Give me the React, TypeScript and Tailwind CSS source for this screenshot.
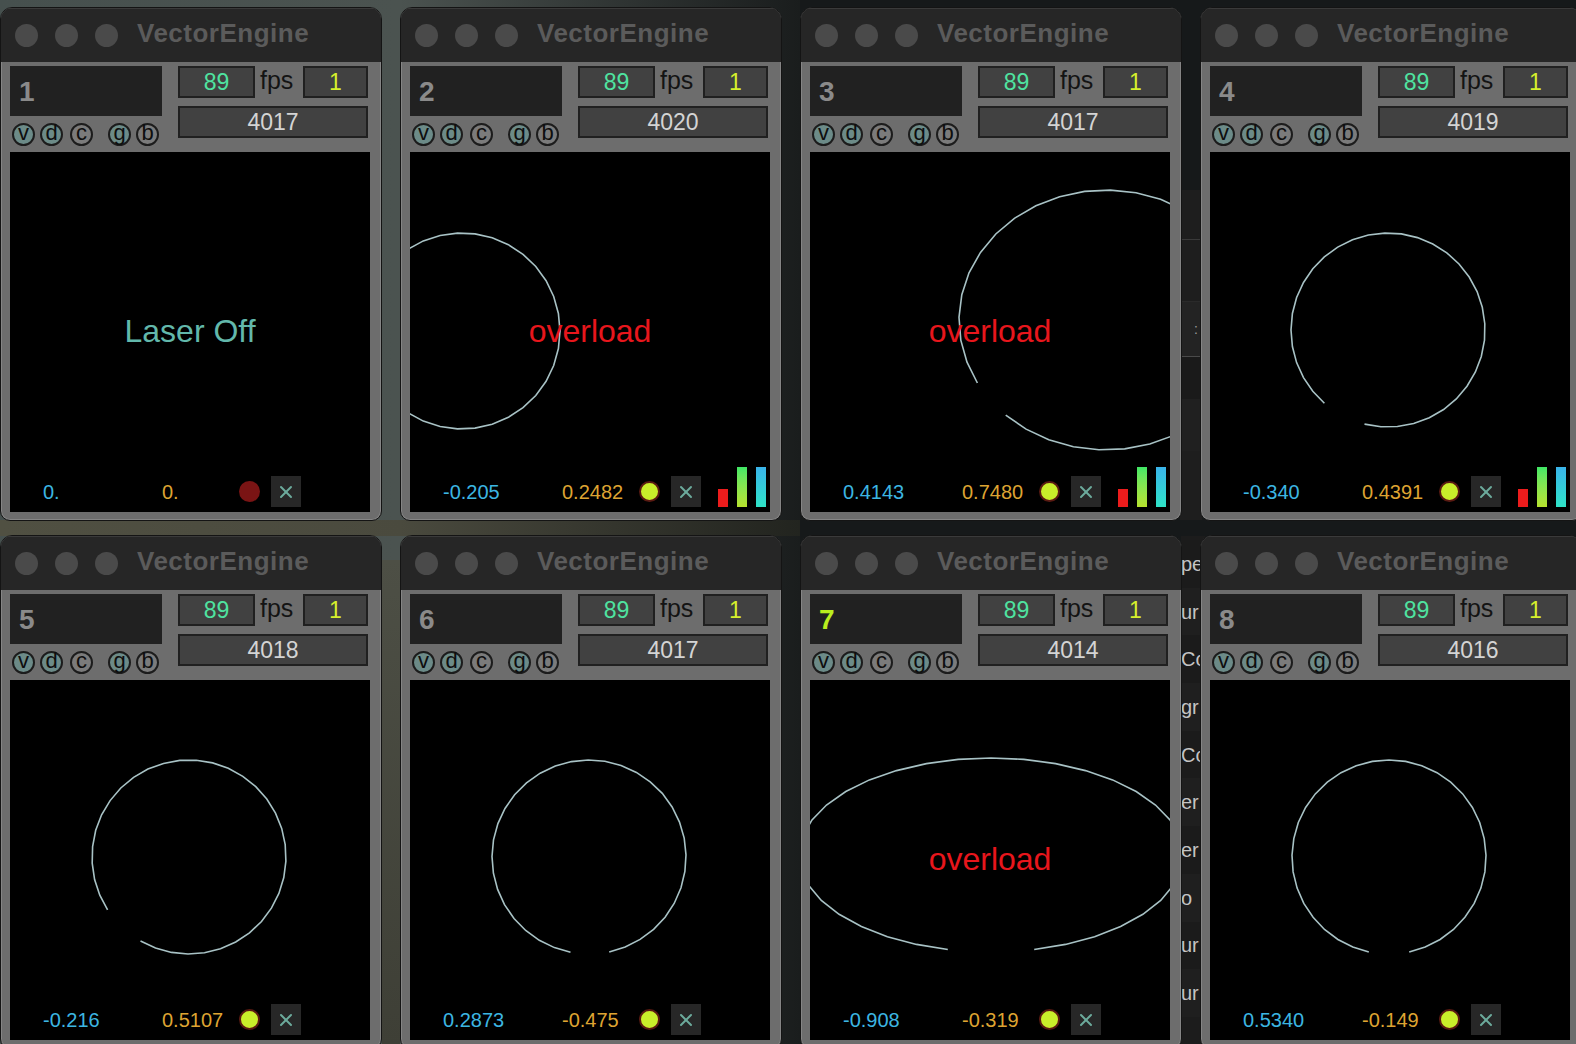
import React from 'react';
import { X } from 'lucide-react';

type Shape = { cx: number; cy: number; rx: number; ry: number; g0: number; g1: number };

interface Win {
  n: string;
  port: string;
  l: string;
  r: string;
  label?: 'laser' | 'overload';
  shape?: Shape;
  bars?: boolean;
  off?: boolean;
  hot?: boolean;
}

const wins: Win[] = [
  { n: '1', port: '4017', l: '0.', r: '0.', label: 'laser', off: true },
  { n: '2', port: '4020', l: '-0.205', r: '0.2482', label: 'overload', bars: true, shape: { cx: 52, cy: 179, rx: 98, ry: 98, g0: 175, g1: 185 } },
  { n: '3', port: '4017', l: '0.4143', r: '0.7480', label: 'overload', bars: true, shape: { cx: 296, cy: 168, rx: 147, ry: 130, g0: 133, g1: 151 } },
  { n: '4', port: '4019', l: '-0.340', r: '0.4391', bars: true, shape: { cx: 178, cy: 178, rx: 97, ry: 97, g0: 104, g1: 131 } },
  { n: '5', port: '4018', l: '-0.216', r: '0.5107', shape: { cx: 179, cy: 177, rx: 97, ry: 97, g0: 120, g1: 147 } },
  { n: '6', port: '4017', l: '0.2873', r: '-0.475', shape: { cx: 179, cy: 177, rx: 97, ry: 97, g0: 78, g1: 101 } },
  { n: '7', port: '4014', l: '-0.908', r: '-0.319', label: 'overload', hot: true, shape: { cx: 181, cy: 175, rx: 192, ry: 97, g0: 77, g1: 103 } },
  { n: '8', port: '4016', l: '0.5340', r: '-0.149', shape: { cx: 179, cy: 177, rx: 97, ry: 97, g0: 78, g1: 102 } },
];

// polygonal ring with a gap, like the laser preview draws it
function ringPoints(s: Shape) {
  const pts: string[] = [];
  const span = 360 - (s.g1 - s.g0);
  const segs = 34;
  for (let i = 0; i <= segs; i++) {
    const a = ((s.g1 + (span * i) / segs) * Math.PI) / 180;
    pts.push(`${(s.cx + s.rx * Math.cos(a)).toFixed(1)},${(s.cy + s.ry * Math.sin(a)).toFixed(1)}`);
  }
  return pts.join(' ');
}

const Toggle: React.FC<{ ch: string; on?: boolean }> = ({ ch, on }) => (
  <div
    className={`w-[23px] h-[23px] rounded-full border-2 border-[#1c1c1c] flex items-center justify-center text-[22px] leading-none text-[#0e0e0e] pb-[3px] ${
      on ? 'bg-[#6c8b88]' : 'bg-[#7b7b7b]'
    }`}
  >
    {ch}
  </div>
);

const Window: React.FC<{ w: Win }> = ({ w }) => (
  <div className="relative w-[382px] h-[514px] rounded-t-[12px] rounded-b-[10px] border border-[#141414] bg-[#6d6d6d] overflow-hidden flex flex-col shadow-[inset_0_0_0_1px_#858585]">
    {/* title bar */}
    <div className="h-[54px] shrink-0 bg-[#262626] flex items-center pl-[14px] border-t border-[#3a3a3a]">
      <div className="w-[23px] h-[23px] rounded-full bg-[#4a4a4a]" />
      <div className="w-[23px] h-[23px] rounded-full bg-[#4a4a4a] ml-[17px]" />
      <div className="w-[23px] h-[23px] rounded-full bg-[#4a4a4a] ml-[17px]" />
      <span className="ml-[19px] pb-[4px] text-[26px] font-bold text-[#5b5b5b] tracking-[0.5px]">VectorEngine</span>
    </div>

    <div className="px-[9px] pt-[4px] flex flex-col">
      {/* controls */}
      <div className="h-[86px] flex">
        <div className="w-[152px] flex flex-col">
          <div className="h-[50px] bg-[#212121] flex items-center pl-[9px] pt-[2px]">
            <span className={`text-[28px] font-bold ${w.hot ? 'text-[#b9ee1e]' : 'text-[#8a8a8a]'}`}>{w.n}</span>
          </div>
          <div className="mt-[7px] flex items-center pl-[2px]">
            <Toggle ch="v" on />
            <div className="ml-[5px]"><Toggle ch="d" on /></div>
            <div className="ml-[7px]"><Toggle ch="c" /></div>
            <div className="ml-[15px]"><Toggle ch="g" on /></div>
            <div className="ml-[5px]"><Toggle ch="b" /></div>
          </div>
        </div>
        <div className="ml-[16px] w-[190px] flex flex-col">
          <div className="flex items-center h-[32px]">
            <div className="w-[77px] h-[32px] bg-[#414141] border-2 border-[#202020] flex items-center justify-center text-[23px] text-[#4fe3a0]">
              89
            </div>
            <span className="ml-[5px] text-[25px] text-[#141414] pb-[3px]">fps</span>
            <div className="ml-auto w-[65px] h-[32px] bg-[#414141] border-2 border-[#202020] flex items-center justify-center text-[23px] text-[#d6f02c]">
              1
            </div>
          </div>
          <div className="mt-[8px] h-[32px] bg-[#414141] border-2 border-[#202020] flex items-center justify-center text-[23px] text-[#d4d4d4]">
            {w.port}
          </div>
        </div>
      </div>

      {/* preview */}
      <div className="relative w-[360px] h-[360px] bg-black overflow-hidden flex flex-col">
        {w.shape && (
          <svg className="absolute inset-0" width={360} height={360}>
            <polyline points={ringPoints(w.shape)} fill="none" stroke="#a8c2c5" strokeWidth={1.6} />
          </svg>
        )}
        <div className="relative flex-1 flex items-center justify-center pt-[34px]">
          {w.label === 'laser' && <span className="text-[32px] text-[#62b8ab]">Laser Off</span>}
          {w.label === 'overload' && <span className="text-[32px] text-[#e8161c]">overload</span>}
        </div>
        <div className="relative h-[36px] flex items-center pl-[33px] pb-[5px]">
          <span className="w-[119px] text-[20px] text-[#3cb6e2]">{w.l}</span>
          <span className="w-[77px] text-[20px] text-[#dea432]">{w.r}</span>
          {w.off ? (
            <div className="w-[21px] h-[21px] rounded-full bg-[#7a1414]" />
          ) : (
            <div className="w-[21px] h-[21px] rounded-full bg-[#c9ee2a] border-2 border-[#5a1a12]" />
          )}
          <div className="ml-[11px] w-[30px] h-[31px] bg-[#272727] flex items-center justify-center">
            <X size={20} strokeWidth={2.4} color="#6cab9c" />
          </div>
          {w.bars && (
            <div className="ml-auto mr-[4px] self-end flex items-end gap-[8px] h-[40px] mb-[0px]">
              <div className="w-[10px] h-[18px] bg-[#ec1c1c]" />
              <div className="w-[10px] h-[40px] bg-gradient-to-b from-[#3ee866] to-[#b6e22c] ml-[1px]" />
              <div className="w-[10px] h-[40px] bg-gradient-to-b from-[#3ab4ea] to-[#2fe2c6] ml-[1px]" />
            </div>
          )}
        </div>
      </div>
    </div>
  </div>
);

const behind = ['pe', 'ur', 'Co', 'gr', 'Co', 'er', 'er', 'o', 'ur', 'ur'];

export default function App() {
  return (
    <div className="relative w-[1576px] h-[1044px] overflow-hidden bg-[#16191a] font-['Liberation_Sans',Arial,sans-serif]">
      {/* desktop behind the windows */}
      <div className="absolute left-0 top-0 w-[800px] h-[1044px] bg-gradient-to-r from-[#46504e] via-[#4b5350] to-[#1a1d1d]" />
      <div className="absolute left-0 top-[520px] w-[800px] h-[16px] bg-gradient-to-r from-[#505042] via-[#4a4a3e] to-[#22241f]" />
      <div className="absolute left-[382px] top-[560px] w-[18px] h-[484px] bg-gradient-to-b from-[#4d4f45] to-[#3e3f36]" />
      <div className="absolute left-[1180px] top-[190px] w-[22px] h-[330px] bg-[#1e1e1e] flex flex-col">
        <div className="h-[50px] border-b border-[#3a3a3a]" />
        <div className="h-[62px] border-b border-[#2a2a2a]" />
        <div className="h-[55px] bg-[#232323] border-b border-[#4a4a4a] flex items-center justify-end pr-[4px] text-[#9a9a9a] text-[14px]">:</div>
        <div className="h-[42px] bg-[#1a1a1a]" />
        <div className="h-[52px] bg-[#202020]" />
      </div>
      <div className="absolute left-[1181px] top-[536px] w-[24px] h-[508px] bg-[#1c1c1c] flex flex-col pt-[4px]">
        {behind.map((t, i) => (
          <div key={i} className={`h-[47.7px] flex items-center text-[20px] text-[#c4c4c4] ${i % 2 ? 'bg-[#1f1f1f]' : 'bg-[#1b1b1b]'}`}>
            {t}
          </div>
        ))}
      </div>

      <div className="relative pt-[7px] grid grid-cols-[repeat(4,382px)] gap-x-[18px] gap-y-[14px]">
        {wins.map((w) => (
          <Window key={w.n} w={w} />
        ))}
      </div>
    </div>
  );
}
